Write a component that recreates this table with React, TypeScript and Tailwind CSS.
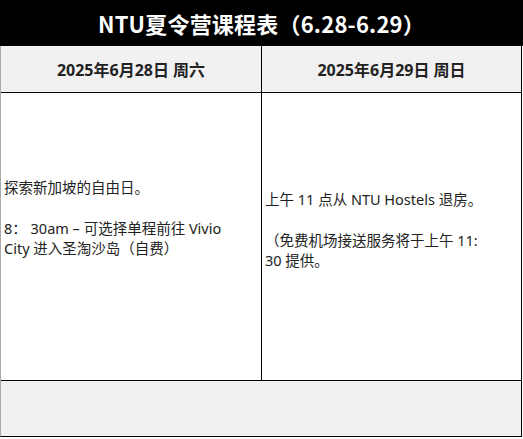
import React from 'react';

const font = { fontFamily: '"Noto Sans CJK SC", "Noto Sans", sans-serif' };
const mixed = { fontFamily: '"Noto Sans", "Noto Sans CJK SC", sans-serif' };

const days = [
  { date: '2025年6月28日 周六' },
  { date: '2025年6月29日 周日' },
];

export default function App() {
  return (
    <div className="w-[523px] h-[439px] bg-white overflow-hidden text-[#1a1a1a]" style={font}>
      <div className="h-[46px] bg-black text-white flex items-center justify-center text-[22px] font-bold tracking-[0.2px]">
        NTU夏令营课程表（6.28-6.29）
      </div>
      <div className="w-[522px] border-l border-l-[#a9a9a9] border-r border-r-black border-b border-b-black" style={mixed}>
        <div className="grid grid-cols-[261px_1fr] h-[47px] bg-[#f1f1f1] border-b border-b-black">
          {days.map((d, i) => (
            <div
              key={d.date}
              className={`flex items-center justify-center pt-[1px] text-[16px] font-bold text-[#222] ${i === 0 ? 'border-r border-r-black' : ''}`}
            >
              {d.date}
            </div>
          ))}
        </div>
        <div className="grid grid-cols-[261px_1fr] h-[288px] border-b border-b-black bg-white">
          <div className="border-r border-r-black pl-[3px] pt-[84px] text-[14.5px] leading-[20px] text-[#222] overflow-hidden">
            <p className="whitespace-nowrap">探索新加坡的自由日。</p>
            <p className="mt-[21px] whitespace-nowrap">8：&nbsp;30am – 可选择单程前往 Vivio</p>
            <p className="whitespace-nowrap">City 进入圣淘沙岛（自费）</p>
          </div>
          <div className="pl-[3px] pt-[96px] text-[14.5px] leading-[20px] text-[#222] overflow-hidden">
            <p className="whitespace-nowrap">上午 11 点从 NTU Hostels 退房。</p>
            <p className="mt-[21px] whitespace-nowrap">（免费机场接送服务将于上午 11:</p>
            <p className="whitespace-nowrap">30 提供。</p>
          </div>
        </div>
        <div className="h-[55px] bg-[#f1f1f1]" />
      </div>
    </div>
  );
}
